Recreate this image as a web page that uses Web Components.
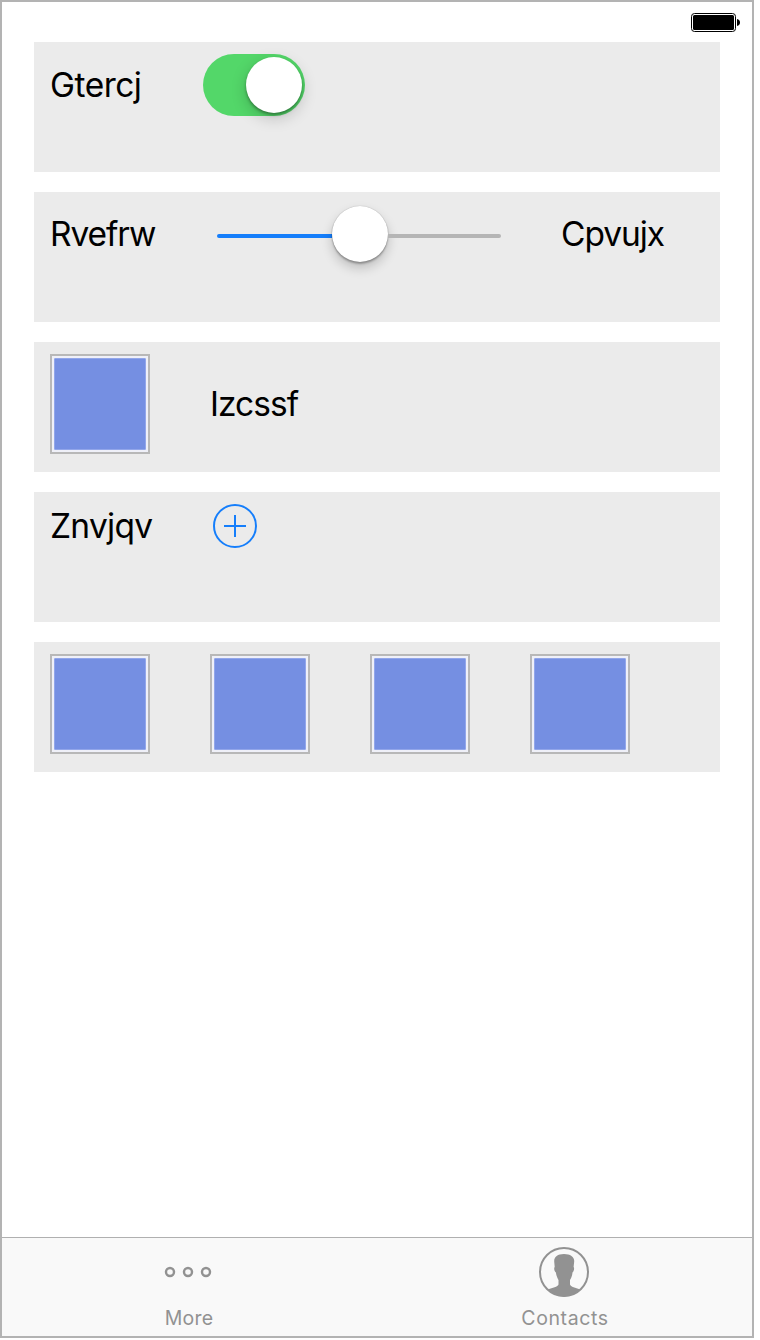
<!DOCTYPE html>
<html lang="en"><head><meta charset="utf-8"><title>Controls</title>
<style>body{margin:0;background:#fff;font-family:Inter,"Liberation Sans",sans-serif;color:#000}</style></head>
<body>
<phone-frame>
  <battery-icon slot="status"></battery-icon>
  <control-row><text-label style="width:153px;margin-top:1px;letter-spacing:-.5px">Gtercj</text-label><toggle-switch></toggle-switch></control-row>
  <control-row><text-label style="width:167px;letter-spacing:-1.1px">Rvefrw</text-label><range-slider></range-slider><text-label style="margin-left:60px;letter-spacing:-1.05px">Cpvujx</text-label></control-row>
  <control-row><color-tile></color-tile><text-label style="margin:20px 0 0 60px;letter-spacing:-.95px">Izcssf</text-label></control-row>
  <control-row><text-label style="width:163px;margin-top:-8px;letter-spacing:-.7px">Znvjqv</text-label><add-button></add-button></control-row>
  <control-row style="--gap:60px"><color-tile></color-tile><color-tile></color-tile><color-tile></color-tile><color-tile></color-tile></control-row>
  <tab-item slot="tabs" label="More" style="letter-spacing:.2px"><svg width="50" height="50" viewBox="0 0 50 50" fill="none" stroke="#929292" stroke-width="2.4"><circle cx="7" cy="25" r="4"/><circle cx="25" cy="25" r="4"/><circle cx="43" cy="25" r="4"/></svg></tab-item>
  <tab-item slot="tabs" label="Contacts"><svg width="50" height="50" viewBox="0 0 50 50"><circle cx="25" cy="25" r="24" fill="none" stroke="#929292" stroke-width="2"/><path fill="#929292" d="M25 7C18.500 7 15 10 15.200 14.500L15.700 20C14.700 20.500 15.300 24.500 16.900 25.500C17.300 29 18.700 31.500 19.500 33V37.500C19 40 13 41 9.500 42.300C13.500 47.500 19 49.500 25 49.500S36.500 47.500 40.500 42.300C37 41 31.500 40 31 37.500V33C32 31.500 33.200 29 33.500 25.500C35 24.500 35.600 20.500 34.600 20L35.200 14.500C35.500 10 31.500 7 25 7Z"/></svg></tab-item>
</phone-frame>
<script>
const define=(name,html)=>customElements.define(name,class extends HTMLElement{
  constructor(){super();this.attachShadow({mode:'open'}).innerHTML=html;}
});
define('phone-frame',`<style>
:host{display:flex;flex-direction:column;box-sizing:border-box;width:754px;height:1338px;border:2px solid #b3b3b3;background:#fff}
header{height:40px;box-sizing:border-box;padding:11px 11px 0 0;display:flex;justify-content:flex-end}
main{flex:1;display:flex;flex-direction:column;gap:20px;padding:0 32px}
footer{height:98px;border-top:1px solid #b0b0b0;background:#f9f9f9;display:grid;grid-template-columns:372px 380px;overflow:hidden}
</style><header><slot name="status"></slot></header><main><slot></slot></main><footer><slot name="tabs"></slot></footer>`);
define('battery-icon',`<style>:host{display:block;width:50px;height:19px}svg{display:block}</style>
<svg width="50" height="19"><rect x=".5" y=".5" width="44" height="18" rx="3" fill="#fff" stroke="#000"/><rect x="2" y="2" width="41" height="15" rx="1.500" fill="#000"/><path d="M46 6C50 6.500 50 12.500 46 13Z" fill="#000"/></svg>`);
define('control-row',`<style>:host{display:flex;align-items:flex-start;box-sizing:border-box;height:130px;padding:12px 16px;background:#ebebeb;gap:var(--gap,0)}</style><slot></slot>`);
define('text-label',`<style>:host{display:block;font-size:33.5px;line-height:60px;white-space:nowrap}</style><slot></slot>`);
define('toggle-switch',`<style>:host{display:flex;justify-content:flex-end;box-sizing:border-box;width:102px;height:62px;border-radius:31px;background:#53d769;padding:3px}
i{width:56px;height:56px;border-radius:50%;background:#fff;box-shadow:0 5px 16px #0003,0 2px 3px #0005}</style><i></i>`);
define('range-slider',`<style>:host{display:flex;align-items:center;width:284px;height:60px}
b{height:4px;margin-top:4px;background:#157efb;width:115px;border-radius:2px 0 0 2px}b.rest{flex:1;background:#b5b5b5;border-radius:0 2px 2px 0}
i{width:56px;height:56px;border-radius:50%;background:#fff;box-shadow:0 6px 12px #0003,0 2px 2px #0004,0 0 1px #0005}</style><b></b><i></i><b class="rest"></b>`);
define('color-tile',`<style>:host{display:block;box-sizing:border-box;width:100px;height:100px;border:2px solid #b8b8b8;background:#eff0f8;padding:2px}
i{display:block;height:92px;box-sizing:border-box;background:#758fe2;border:1px solid #92a6ea;border-radius:1px}</style><i></i>`);
define('add-button',`<style>:host,svg{display:block;width:44px;height:44px}</style><svg viewBox="0 0 44 44" fill="none" stroke="#157efb" stroke-width="2"><circle cx="22" cy="22" r="21"/><path d="M11 22H33M22 11V33"/></svg>`);
customElements.define('tab-item',class extends HTMLElement{
  constructor(){super();this.attachShadow({mode:'open'}).innerHTML=`<style>
:host{display:flex;flex-direction:column;align-items:center;padding-top:9px;color:#929292;font-size:19.5px;letter-spacing:.6px}
::slotted(svg){display:block}span{line-height:24px;margin-top:9px;padding-left:2px}</style><slot></slot><span></span>`;}
  connectedCallback(){this.shadowRoot.querySelector('span').textContent=this.getAttribute('label');}
});
</script></body></html>
